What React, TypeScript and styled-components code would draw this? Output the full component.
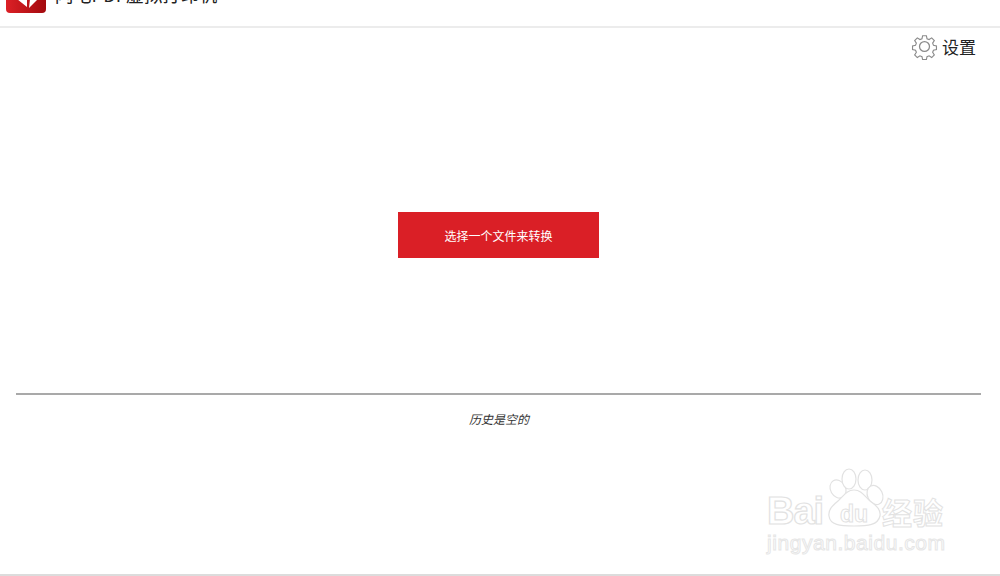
import React from "react";
import styled, { createGlobalStyle } from "styled-components";

const Global = createGlobalStyle`
  html, body { margin: 0; padding: 0; background: #fff; overflow: hidden; }
  body { font-family: "Liberation Sans", "Noto Sans CJK SC", sans-serif; }
`;
const Page = styled.div`
  position: relative; width: 1000px; height: 576px; overflow: hidden; background: #fff;
  display: flex; flex-direction: column;
`;
const Header = styled.header`
  height: 26px; flex: none; border-bottom: 2px solid #ececec; box-sizing: content-box;
  display: flex; align-items: flex-end; padding-left: 6px; gap: 9px; overflow: hidden;
`;
const Logo = styled.svg`width: 40px; height: 14px; flex: none; margin-bottom: 13px;`;
const Title = styled.div`
  font: 18.3px/24px "Noto Sans CJK SC", sans-serif; color: #222; margin-bottom: 20px; white-space: nowrap;
`;
const SettingsRow = styled.div`
  height: 38px; flex: none; display: flex; justify-content: flex-end; align-items: center; padding-right: 24px; gap: 4px;
`;
const GearIcon = styled.svg`width: 27px; height: 27px; margin-bottom: 2px; flex: none;`;
const SettingsLabel = styled.span`font: 17px/20px "Noto Sans CJK SC", sans-serif; color: #222;`;
const Center = styled.div`height: 327px; flex: none; display: flex; justify-content: center; padding-top: 146px; box-sizing: border-box; padding-right: 3px;`;
const Convert = styled.button`
  width: 201px; height: 46px; border: 0; background: #da1f26; color: #fff; padding: 2px 0 0;
  font: 12px/16px "Noto Sans CJK SC", sans-serif;
`;
const Divider = styled.hr`margin: 0 19px 0 16px; border: 0; height: 2px; background: #a9a9a9; flex: none;`;
const Empty = styled.div`
  margin-top: 16px; text-align: center; font: italic 12px/16px "Noto Sans CJK SC", sans-serif; color: #333; padding-right: 2px;
`;
const FooterLine = styled.div`position: absolute; left: 0; right: 0; bottom: 0; height: 2px; background: #dcdcdc;`;
const Mark = styled.div`position: absolute; left: 766px; top: 468px; width: 190px; height: 90px;`;
const MarkBai = styled.span`
  position: absolute; left: 1px; top: 21px; font: 700 38px/44px "Liberation Sans", sans-serif; letter-spacing: -1px;
  color: #fff; -webkit-text-stroke: 1.2px #e2e2e2;
`;
const MarkCn = styled.span`
  position: absolute; left: 116px; top: 24px; font: 700 30px/38px "Noto Sans CJK SC", sans-serif;
  color: #fff; -webkit-text-stroke: 1px #e2e2e2; letter-spacing: 1px;
`;
const MarkUrl = styled.span`
  position: absolute; left: 1px; top: 62px; font: 21px/26px "Liberation Sans", sans-serif; letter-spacing: .55px;
  color: #fff; -webkit-text-stroke: 1px #e6e6e6; white-space: nowrap;
`;
const Paw = styled.svg`position: absolute; left: 0; top: 0; width: 190px; height: 70px;`;
const MarkDu = styled.span`
  position: absolute; left: 74px; top: 33px; font: 700 23px/26px "Liberation Sans", sans-serif;
  color: #fff; -webkit-text-stroke: 1px #e2e2e2;
`;

const Gear = () => (
  <GearIcon viewBox="0 0 26 26" fill="none" stroke="#8a8a8a" strokeWidth="1.2">
    <circle cx="13" cy="13" r="4.8" />
    <path d="M11 1.5h4l.7 3.2 2.2.9 2.8-1.8 2.8 2.8-1.8 2.8.9 2.2 3.2.7v4l-3.2.7-.9 2.2 1.8 2.8-2.8 2.8-2.8-1.8-2.2.9-.7 3.2h-4l-.7-3.2-2.2-.9-2.8 1.8-2.8-2.8 1.8-2.8-.9-2.2-3.2-.7v-4l3.2-.7.9-2.2-1.8-2.8 2.8-2.8 2.8 1.8 2.2-.9z" transform="translate(1.3 1.3) scale(.9)" />
  </GearIcon>
);

export default function App() {
  return (
    <Page>
      <Global />
      <Header>
        <Logo viewBox="0 0 40 14">
          <defs>
            <linearGradient id="lg" x1="0" x2="1" y1="0" y2="0">
              <stop offset="0" stopColor="#dc2026" />
              <stop offset="1" stopColor="#a30a0e" />
            </linearGradient>
          </defs>
          <path d="M0 0h40v10a4 4 0 0 1-4 4H4a4 4 0 0 1-4-4z" fill="url(#lg)" />
          <path d="M11 0h10v8zM24 0h8l-9 9z" fill="#fff" />
        </Logo>
        <Title>闪电PDF虚拟打印机</Title>
      </Header>
      <SettingsRow>
        <Gear />
        <SettingsLabel>设置</SettingsLabel>
      </SettingsRow>
      <Center><Convert>选择一个文件来转换</Convert></Center>
      <Divider />
      <Empty>历史是空的</Empty>
      <Mark>
        <Paw viewBox="0 0 190 70" fill="#fff" stroke="#e2e2e2" strokeWidth="1.2">
          <ellipse cx="72" cy="21" rx="7.500" ry="9.500" transform="rotate(-30 72 21)" />
          <ellipse cx="83" cy="11" rx="7" ry="10" />
          <ellipse cx="99" cy="12" rx="7" ry="10" />
          <ellipse cx="109" cy="27" rx="7.500" ry="10" transform="rotate(-25 109 27)" />
          <path d="M88 22c8 0 11 7 16 11 7 5 11 9 10 15-2 9-12 10-26 10-14 0-24-1-25-10-1-6 3-10 9-15 5-4 8-11 16-11z" />
        </Paw>
        <MarkBai>Bai</MarkBai>
        <MarkDu>du</MarkDu>
        <MarkCn>经验</MarkCn>
        <MarkUrl>jingyan.baidu.com</MarkUrl>
      </Mark>
      <FooterLine />
    </Page>
  );
}
